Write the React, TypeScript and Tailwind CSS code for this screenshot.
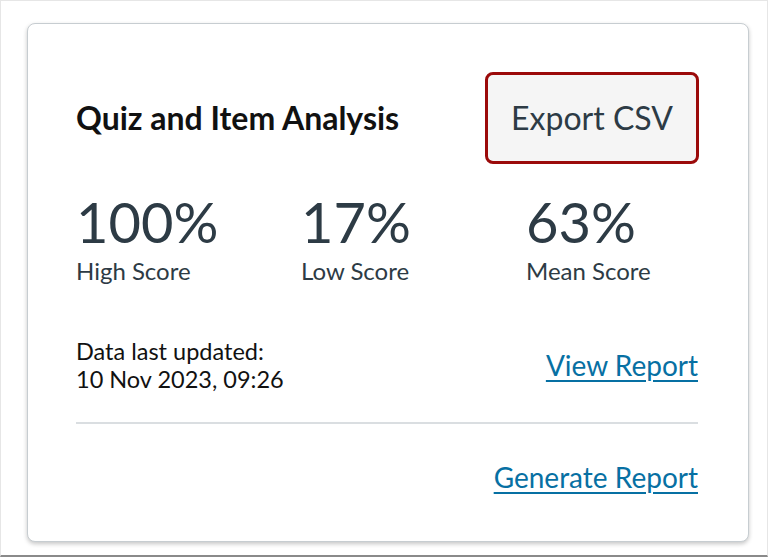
import React from 'react';

const stats = [
  { value: '100%', label: 'High Score' },
  { value: '17%', label: 'Low Score' },
  { value: '63%', label: 'Mean Score' },
];

const App: React.FC = () => {
  return (
    <div
      className="w-[768px] h-[557px] bg-white border border-[#e6e6e6] border-b-[#8a8a8a] border-b-2 pt-[22px] px-[26px] overflow-hidden"
      style={{ fontFamily: 'Lato, "Open Sans", sans-serif' }}
    >
      {/* Card */}
      <div className="w-[722px] h-[519px] bg-white border border-[#c7cdd1] rounded-lg shadow-[0_2px_4px_rgba(0,0,0,0.22)] pl-12 pr-[50px] pt-12">
        {/* Header */}
        <div className="flex items-center justify-between">
          <h2 className="text-[32px] font-bold text-[#111]">Quiz and Item Analysis</h2>
          <button className="w-[214px] h-[92px] bg-[#f5f5f5] border-[3px] border-[#9b0a0a] rounded-[8px] text-[32px] text-[#2d3b45] -mr-[1px]">
            Export CSV
          </button>
        </div>

        {/* Stats */}
        <div className="grid grid-cols-[225px_225px_1fr] mt-[30px]">
          {stats.map((s) => (
            <div key={s.label} className="flex flex-col">
              <span className="text-[56px] leading-[56px] text-[#2d3b45]">{s.value}</span>
              <span className="text-[24px] leading-[30px] mt-[6px] text-[#2d3b45]">{s.label}</span>
            </div>
          ))}
        </div>

        {/* Last updated */}
        <div className="flex items-center justify-between mt-[51px]">
          <div className="text-[23.5px] leading-[28px] text-[#111]">
            <div>Data last updated:</div>
            <div>10 Nov 2023, 09:26</div>
          </div>
          <a href="#" className="text-[28px] text-[#0770a3] underline decoration-2 underline-offset-[4px]">
            View Report
          </a>
        </div>

        <div className="h-[2px] bg-[#dadee1] mt-[29px]" />

        <div className="flex justify-end mt-[32px]">
          <a href="#" className="text-[28px] text-[#0770a3] underline decoration-2 underline-offset-[4px]">
            Generate Report
          </a>
        </div>
      </div>
    </div>
  );
};

export default App;
